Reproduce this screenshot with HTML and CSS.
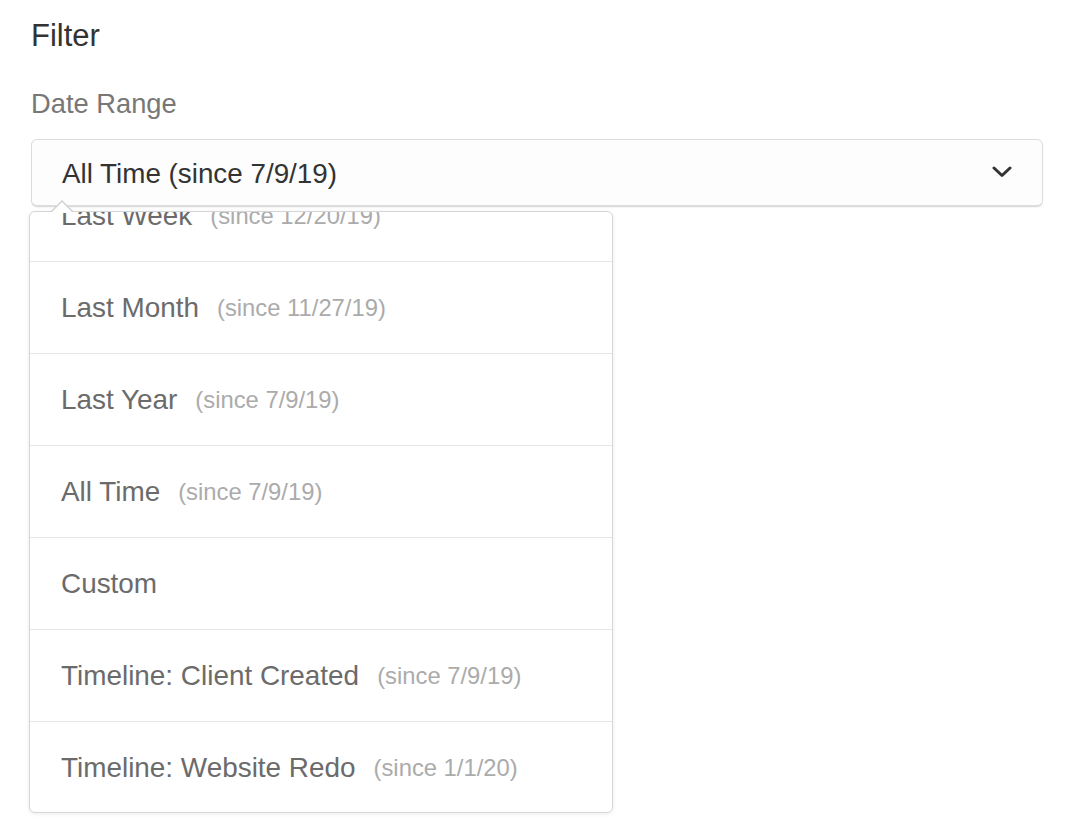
FILE: index.html
```html
<!DOCTYPE html>
<html lang="en">
<head>
<meta charset="utf-8">
<title>Filter</title>
<link rel="stylesheet" href="styles.css">
</head>
<body>
<div class="page">
  <h2 class="title">Filter</h2>
  <div class="label">Date Range</div>
  <div class="field">
    <div class="select">
      <span class="select-value">All Time (since 7/9/19)</span>
      <svg class="chevron" width="20" height="12" viewBox="0 0 20 12"><path d="M2 2 L10 9.5 L18 2" fill="none" stroke="#333" stroke-width="3" stroke-linecap="round" stroke-linejoin="round"/></svg>
    </div>
    <div class="menu">
      <div class="caret"></div>
      <div class="menu-viewport">
        <ul class="menu-list">
          <li class="item"><span class="main">Last Week</span><span class="sub">(since 12/20/19)</span></li>
          <li class="item"><span class="main">Last Month</span><span class="sub">(since 11/27/19)</span></li>
          <li class="item"><span class="main">Last Year</span><span class="sub">(since 7/9/19)</span></li>
          <li class="item"><span class="main">All Time</span><span class="sub">(since 7/9/19)</span></li>
          <li class="item"><span class="main">Custom</span></li>
          <li class="item"><span class="main">Timeline: Client Created</span><span class="sub">(since 7/9/19)</span></li>
          <li class="item"><span class="main">Timeline: Website Redo</span><span class="sub">(since 1/1/20)</span></li>
        </ul>
      </div>
    </div>
  </div>
</div>
</body>
</html>
```

FILE: styles.css
```css
* { box-sizing: border-box; }
html, body { margin: 0; padding: 0; background: #fff; }
body { font-family: "Liberation Sans", Arial, Helvetica, sans-serif; color: #333; min-height: 838px; }

.page { padding: 18px 27px 0 31px; }

.title {
  margin: 0;
  font-size: 31px;
  line-height: 36px;
  font-weight: normal;
  color: #333;
}

.label {
  margin-top: 34px;
  font-size: 27.3px;
  line-height: 32px;
  color: #777;
}

.field {
  margin-top: 19px;
  display: flex;
  flex-direction: column;
}

.select {
  height: 68px;
  border: 1px solid #dcdcdc;
  border-bottom-width: 2px;
  border-radius: 6px;
  background: #fdfdfd;
  box-shadow: 0 1px 1px rgba(0,0,0,0.04);
  display: flex;
  align-items: center;
  justify-content: space-between;
  padding: 3px 30px 0 30px;
}

.select-value {
  font-size: 27.8px;
  color: #333;
  line-height: 32px;
}

.chevron { display: block; margin-top: -4px; }

.menu {
  position: relative;
  margin: 4px 0 0 -2px;
  width: 584px;
  height: 602px;
  background: #fff;
  border: 1px solid #d6d6d6;
  border-radius: 6px;
  box-shadow: 0 1px 4px rgba(0,0,0,0.08);
}

.caret {
  position: absolute;
  left: 20px;
  top: -12px;
  width: 0;
  height: 0;
  border-left: 12px solid transparent;
  border-right: 12px solid transparent;
  border-bottom: 12px solid #d0d0d0;
  z-index: 2;
}
.caret::after {
  content: "";
  position: absolute;
  left: -11px;
  top: 1.5px;
  border-left: 11px solid transparent;
  border-right: 11px solid transparent;
  border-bottom: 11px solid #fff;
}

.menu-viewport {
  height: 100%;
  overflow: hidden;
  border-radius: 6px;
}

.menu-list {
  list-style: none;
  margin: -42px 0 0 0;
  padding: 0;
}

.item {
  height: 92px;
  border-bottom: 1px solid #e6e6e6;
  display: flex;
  align-items: center;
  padding-left: 31px;
  white-space: nowrap;
}
.item:last-child { border-bottom: none; }

.main {
  font-size: 27.9px;
  color: #6b6b6b;
}

.sub {
  font-size: 23.8px;
  color: #ababab;
  margin-left: 18px;
}
```
